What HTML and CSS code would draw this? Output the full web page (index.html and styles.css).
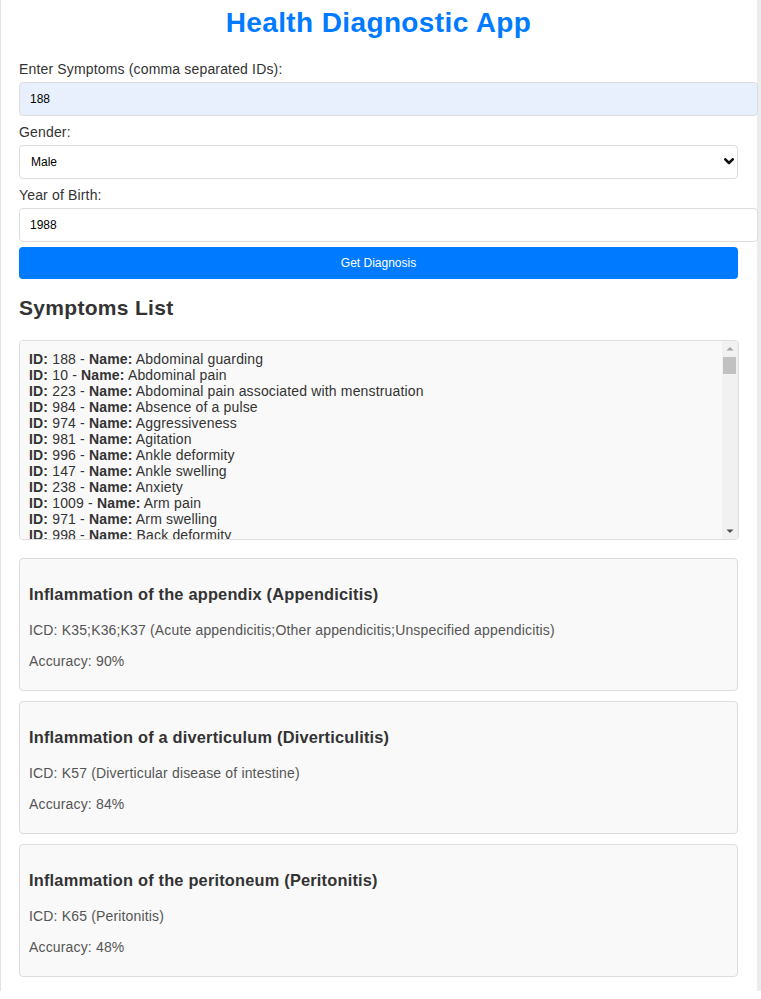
FILE: index.html
```html
<!DOCTYPE html>
<html lang="en">
<head>
<meta charset="utf-8">
<title>Health Diagnostic App</title>
<link rel="stylesheet" href="styles.css">
</head>
<body>
<div class="container">
  <h1 class="title">Health Diagnostic App</h1>
  <form class="form">
    <label class="label" for="symptoms">Enter Symptoms (comma separated IDs):</label>
    <input class="control control-text control-autofill" id="symptoms" type="text" value="188">
    <label class="label" for="gender">Gender:</label>
    <div class="select-wrap">
      <select class="control control-select" id="gender">
        <option selected>Male</option>
        <option>Female</option>
      </select>
      <svg class="select-arrow" width="10" height="7" viewBox="0 0 10 7" aria-hidden="true">
        <path d="M1.3 1.3 L5 5 L8.7 1.3" fill="none" stroke="#111" stroke-width="2.6" stroke-linecap="round" stroke-linejoin="round"/>
      </svg>
    </div>
    <label class="label" for="yob">Year of Birth:</label>
    <input class="control control-text" id="yob" type="text" value="1988">
    <button class="btn" type="button">Get Diagnosis</button>
  </form>

  <h2 class="section-title">Symptoms List</h2>
  <div class="list-wrap">
  <div class="symptoms-list">
    <div class="item"><strong>ID:</strong> 188 - <strong>Name:</strong> Abdominal guarding</div>
    <div class="item"><strong>ID:</strong> 10 - <strong>Name:</strong> Abdominal pain</div>
    <div class="item"><strong>ID:</strong> 223 - <strong>Name:</strong> Abdominal pain associated with menstruation</div>
    <div class="item"><strong>ID:</strong> 984 - <strong>Name:</strong> Absence of a pulse</div>
    <div class="item"><strong>ID:</strong> 974 - <strong>Name:</strong> Aggressiveness</div>
    <div class="item"><strong>ID:</strong> 981 - <strong>Name:</strong> Agitation</div>
    <div class="item"><strong>ID:</strong> 996 - <strong>Name:</strong> Ankle deformity</div>
    <div class="item"><strong>ID:</strong> 147 - <strong>Name:</strong> Ankle swelling</div>
    <div class="item"><strong>ID:</strong> 238 - <strong>Name:</strong> Anxiety</div>
    <div class="item"><strong>ID:</strong> 1009 - <strong>Name:</strong> Arm pain</div>
    <div class="item"><strong>ID:</strong> 971 - <strong>Name:</strong> Arm swelling</div>
    <div class="item"><strong>ID:</strong> 998 - <strong>Name:</strong> Back deformity</div>
    <div class="item"><strong>ID:</strong> 104 - <strong>Name:</strong> Back pain</div>
    <div class="item"><strong>ID:</strong> 180 - <strong>Name:</strong> Black stools</div>
    <div class="item"><strong>ID:</strong> 57 - <strong>Name:</strong> Blackening of vision</div>
    <div class="item"><strong>ID:</strong> 24 - <strong>Name:</strong> Blackhead</div>
    <div class="item"><strong>ID:</strong> 284 - <strong>Name:</strong> Bleeding from vagina</div>
    <div class="item"><strong>ID:</strong> 176 - <strong>Name:</strong> Bleeding in the conjunctiva of the eye</div>
    <div class="item"><strong>ID:</strong> 48 - <strong>Name:</strong> Bloated feeling in the stomach</div>
    <div class="item"><strong>ID:</strong> 190 - <strong>Name:</strong> Blood in stool</div>
    <div class="item"><strong>ID:</strong> 233 - <strong>Name:</strong> Bloody cough</div>
    <div class="item"><strong>ID:</strong> 991 - <strong>Name:</strong> Blue colored skin</div>
    <div class="item"><strong>ID:</strong> 240 - <strong>Name:</strong> Blue spot on skin</div>
    <div class="item"><strong>ID:</strong> 77 - <strong>Name:</strong> Blurred vision</div>
    <div class="item"><strong>ID:</strong> 239 - <strong>Name:</strong> Bold area among hair on the head</div>
    <div class="item"><strong>ID:</strong> 156 - <strong>Name:</strong> Bone fracture</div>
    <div class="item"><strong>ID:</strong> 250 - <strong>Name:</strong> Breathing-related pains</div>
    <div class="item"><strong>ID:</strong> 979 - <strong>Name:</strong> Brittle nails</div>
    <div class="item"><strong>ID:</strong> 192 - <strong>Name:</strong> Bulging abdominal wall</div>
    <div class="item"><strong>ID:</strong> 75 - <strong>Name:</strong> Burning eyes</div>
    <div class="item"><strong>ID:</strong> 46 - <strong>Name:</strong> Burning in the throat</div>
    <div class="item"><strong>ID:</strong> 288 - <strong>Name:</strong> Burning nose</div>
    <div class="item"><strong>ID:</strong> 107 - <strong>Name:</strong> Burning sensation when urinating</div>
    <div class="item"><strong>ID:</strong> 91 - <strong>Name:</strong> Changes in the nails</div>
    <div class="item"><strong>ID:</strong> 170 - <strong>Name:</strong> Cheek swelling</div>
    <div class="item"><strong>ID:</strong> 17 - <strong>Name:</strong> Chest pain</div>
    <div class="item"><strong>ID:</strong> 31 - <strong>Name:</strong> Chest tightness</div>
    <div class="item"><strong>ID:</strong> 175 - <strong>Name:</strong> Chills</div>
    <div class="item"><strong>ID:</strong> 218 - <strong>Name:</strong> Coarsening of the skin structure</div>
    <div class="item"><strong>ID:</strong> 89 - <strong>Name:</strong> Cold feet</div>
    <div class="item"><strong>ID:</strong> 978 - <strong>Name:</strong> Cold hands</div>
    <div class="item"><strong>ID:</strong> 139 - <strong>Name:</strong> Cold sweats</div>
    <div class="item"><strong>ID:</strong> 15 - <strong>Name:</strong> Cough</div>
    <div class="item"><strong>ID:</strong> 228 - <strong>Name:</strong> Cough with sputum</div>
    <div class="item"><strong>ID:</strong> 94 - <strong>Name:</strong> Cramps</div>
    <div class="item"><strong>ID:</strong> 49 - <strong>Name:</strong> Cravings</div>
    <div class="item"><strong>ID:</strong> 134 - <strong>Name:</strong> Crusting</div>
    <div class="item"><strong>ID:</strong> 260 - <strong>Name:</strong> Curvature of the spine</div>
    <div class="item"><strong>ID:</strong> 108 - <strong>Name:</strong> Dark urine</div>
    <div class="item"><strong>ID:</strong> 163 - <strong>Name:</strong> Decreased urine stream</div>
    <div class="item"><strong>ID:</strong> 165 - <strong>Name:</strong> Delayed start to urination</div>
    <div class="item"><strong>ID:</strong> 50 - <strong>Name:</strong> Diarrhea</div>
    <div class="item"><strong>ID:</strong> 79 - <strong>Name:</strong> Difficult defecation</div>
    <div class="item"><strong>ID:</strong> 126 - <strong>Name:</strong> Difficulty in finding words</div>
    <div class="item"><strong>ID:</strong> 98 - <strong>Name:</strong> Difficulty in speaking</div>
    <div class="item"><strong>ID:</strong> 93 - <strong>Name:</strong> Difficulty in swallowing</div>
    <div class="item"><strong>ID:</strong> 53 - <strong>Name:</strong> Difficulty to concentrate</div>
    <div class="item"><strong>ID:</strong> 1007 - <strong>Name:</strong> Difficulty to learn</div>
    <div class="item"><strong>ID:</strong> 1005 - <strong>Name:</strong> Difficulty with movement</div>
    <div class="item"><strong>ID:</strong> 216 - <strong>Name:</strong> Dilated veins</div>
    <div class="item"><strong>ID:</strong> 207 - <strong>Name:</strong> Dizziness</div>
    <div class="item"><strong>ID:</strong> 244 - <strong>Name:</strong> Double vision</div>
    <div class="item"><strong>ID:</strong> 43 - <strong>Name:</strong> Drowsiness</div>
    <div class="item"><strong>ID:</strong> 273 - <strong>Name:</strong> Dry eyes</div>
    <div class="item"><strong>ID:</strong> 272 - <strong>Name:</strong> Dry mouth</div>
    <div class="item"><strong>ID:</strong> 151 - <strong>Name:</strong> Dry skin</div>
    <div class="item"><strong>ID:</strong> 87 - <strong>Name:</strong> Earache</div>
    <div class="item"><strong>ID:</strong> 92 - <strong>Name:</strong> Early satiety</div>
    <div class="item"><strong>ID:</strong> 1011 - <strong>Name:</strong> Elbow pain</div>
    <div class="item"><strong>ID:</strong> 1006 - <strong>Name:</strong> Enlarged calf</div>
    <div class="item"><strong>ID:</strong> 81 - <strong>Name:</strong> Eruption of skin</div>
    <div class="item"><strong>ID:</strong> 40 - <strong>Name:</strong> Excessive appetite</div>
    <div class="item"><strong>ID:</strong> 224 - <strong>Name:</strong> Excessive urination at night</div>
    <div class="item"><strong>ID:</strong> 257 - <strong>Name:</strong> Eye pain</div>
    <div class="item"><strong>ID:</strong> 259 - <strong>Name:</strong> Eye redness</div>
    <div class="item"><strong>ID:</strong> 2 - <strong>Name:</strong> Fast, deepened breathing</div>
    <div class="item"><strong>ID:</strong> 16 - <strong>Name:</strong> Fatigue</div>
    <div class="item"><strong>ID:</strong> 36 - <strong>Name:</strong> Feeling of tension in the legs</div>
    <div class="item"><strong>ID:</strong> 11 - <strong>Name:</strong> Fever</div>
    <div class="item"><strong>ID:</strong> 196 - <strong>Name:</strong> Flatulence</div>
    <div class="item"><strong>ID:</strong> 65 - <strong>Name:</strong> Flu-like symptoms</div>
    <div class="item"><strong>ID:</strong> 232 - <strong>Name:</strong> Foot pain</div>
    <div class="item"><strong>ID:</strong> 1010 - <strong>Name:</strong> Foot swelling</div>
    <div class="item"><strong>ID:</strong> 9 - <strong>Name:</strong> Headache</div>
    <div class="item"><strong>ID:</strong> 45 - <strong>Name:</strong> Heartburn</div>
    <div class="item"><strong>ID:</strong> 122 - <strong>Name:</strong> Hiccups</div>
    <div class="item"><strong>ID:</strong> 149 - <strong>Name:</strong> Hip deformity</div>
    <div class="item"><strong>ID:</strong> 148 - <strong>Name:</strong> Hip pain</div>
    <div class="item"><strong>ID:</strong> 37 - <strong>Name:</strong> Hoarseness</div>
    <div class="item"><strong>ID:</strong> 23 - <strong>Name:</strong> Hot flushes</div>
    <div class="item"><strong>ID:</strong> 124 - <strong>Name:</strong> Immobilization</div>
    <div class="item"><strong>ID:</strong> 123 - <strong>Name:</strong> Impaired balance</div>
    <div class="item"><strong>ID:</strong> 33 - <strong>Name:</strong> Increased appetite</div>
    <div class="item"><strong>ID:</strong> 38 - <strong>Name:</strong> Increased drive</div>
    <div class="item"><strong>ID:</strong> 142 - <strong>Name:</strong> Increased salivation</div>
    <div class="item"><strong>ID:</strong> 52 - <strong>Name:</strong> Insomnia</div>
    <div class="item"><strong>ID:</strong> 13 - <strong>Name:</strong> Itching eyes</div>
    <div class="item"><strong>ID:</strong> 96 - <strong>Name:</strong> Itching of skin</div>
    <div class="item"><strong>ID:</strong> 25 - <strong>Name:</strong> Joint pain</div>
    <div class="item"><strong>ID:</strong> 256 - <strong>Name:</strong> Knee pain</div>
    <div class="item"><strong>ID:</strong> 56 - <strong>Name:</strong> Lack of appetite</div>
    <div class="item"><strong>ID:</strong> 146 - <strong>Name:</strong> Leg pain</div>
    <div class="item"><strong>ID:</strong> 42 - <strong>Name:</strong> Lip swelling</div>
    <div class="item"><strong>ID:</strong> 144 - <strong>Name:</strong> Memory gap</div>
    <div class="item"><strong>ID:</strong> 6 - <strong>Name:</strong> Morning stiffness</div>
    <div class="item"><strong>ID:</strong> 105 - <strong>Name:</strong> Mouth ulcers</div>
    <div class="item"><strong>ID:</strong> 20 - <strong>Name:</strong> Muscle pain</div>
    <div class="item"><strong>ID:</strong> 44 - <strong>Name:</strong> Nausea</div>
    <div class="item"><strong>ID:</strong> 136 - <strong>Name:</strong> Neck pain</div>
    <div class="item"><strong>ID:</strong> 114 - <strong>Name:</strong> Nervousness</div>
    <div class="item"><strong>ID:</strong> 133 - <strong>Name:</strong> Night cough</div>
    <div class="item"><strong>ID:</strong> 35 - <strong>Name:</strong> Pain in the limbs</div>
    <div class="item"><strong>ID:</strong> 29 - <strong>Name:</strong> Shortness of breath</div>
    <div class="item"><strong>ID:</strong> 14 - <strong>Name:</strong> Sore throat</div>
    <div class="item"><strong>ID:</strong> 138 - <strong>Name:</strong> Sweating</div>
    <div class="item"><strong>ID:</strong> 101 - <strong>Name:</strong> Vomiting</div>
    <div class="item"><strong>ID:</strong> 54 - <strong>Name:</strong> Weight loss</div>
  </div>
  <div class="scrollbar" aria-hidden="true">
    <svg class="scroll-arrow" width="16" height="15" viewBox="0 0 16 15"><path d="M4.5 9.5 L8 6 L11.5 9.5 Z" fill="#a3a3a3"/></svg>
    <div class="scroll-track"><div class="scroll-thumb"></div></div>
    <svg class="scroll-arrow" width="16" height="15" viewBox="0 0 16 15"><path d="M4.5 5.5 L8 9 L11.5 5.5 Z" fill="#505050"/></svg>
  </div>
  </div>

  <div class="results">
    <div class="card">
      <h3 class="card-title">Inflammation of the appendix (Appendicitis)</h3>
      <p class="card-text">ICD: K35;K36;K37 (Acute appendicitis;Other appendicitis;Unspecified appendicitis)</p>
      <p class="card-text">Accuracy: 90%</p>
    </div>
    <div class="card">
      <h3 class="card-title">Inflammation of a diverticulum (Diverticulitis)</h3>
      <p class="card-text">ICD: K57 (Diverticular disease of intestine)</p>
      <p class="card-text">Accuracy: 84%</p>
    </div>
    <div class="card">
      <h3 class="card-title">Inflammation of the peritoneum (Peritonitis)</h3>
      <p class="card-text">ICD: K65 (Peritonitis)</p>
      <p class="card-text">Accuracy: 48%</p>
    </div>
  </div>
</div>
</body>
</html>
```

FILE: styles.css
```css
html, body {
  margin: 0;
  padding: 0;
  background: #ffffff;
}

body {
  font-family: "Liberation Sans", Arial, sans-serif;
  font-size: 14px;
  letter-spacing: 0.16px;
  color: #333333;
}

.container {
  width: 761px;
  box-sizing: border-box;
  border-left: 1px solid #e3e3e3;
  border-right: 4px solid #ececec;
  padding: 7px 19px 4px 18px;
}

.title {
  margin: 0 0 19px;
  font-size: 28px;
  font-weight: bold;
  letter-spacing: 0.38px;
  color: #007bff;
  text-align: center;
}

.form {
  display: flex;
  flex-direction: column;
  align-items: flex-start;
}

.label {
  display: block;
  margin: 3px 0 5px;
  line-height: 16px;
  color: #333333;
}

.control {
  box-sizing: border-box;
  height: 34px;
  margin: 0 0 5px;
  padding: 9px 10px;
  font-family: "Liberation Sans", Arial, sans-serif;
  font-size: 12px;
  line-height: 14px;
  letter-spacing: 0;
  color: #000000;
  background: #ffffff;
  border: 1px solid #dddddd;
  border-radius: 4px;
}

.control-text {
  width: 739px;
}

.control-autofill {
  background: #e8f0fe;
}

.select-wrap {
  position: relative;
  align-self: stretch;
}

.control-select {
  display: block;
  width: 100%;
  padding: 0 30px 0 11px;
  -webkit-appearance: none;
  appearance: none;
}

.select-arrow {
  position: absolute;
  right: 4px;
  top: 13px;
  pointer-events: none;
}

.btn {
  width: 100%;
  height: 32px;
  padding: 0;
  border: none;
  border-radius: 4px;
  background: #007bff;
  color: #ffffff;
  font-family: "Liberation Sans", Arial, sans-serif;
  font-size: 12px;
  letter-spacing: 0;
}

.section-title {
  margin: 17px 0 20px;
  font-size: 21px;
  font-weight: bold;
  letter-spacing: 0.3px;
  color: #333333;
}

.list-wrap {
  position: relative;
  margin-right: -1px;
}

.symptoms-list {
  box-sizing: border-box;
  height: 200px;
  overflow-y: auto;
  padding: 10px 26px 10px 9px;
  background: #f9f9f9;
  border: 1px solid #dddddd;
  border-radius: 4px;
  color: #333333;
}

.scrollbar {
  position: absolute;
  top: 1px;
  right: 1px;
  bottom: 1px;
  width: 16px;
  display: flex;
  flex-direction: column;
  background: #f1f1f1;
  border-radius: 0 3px 3px 0;
}

.scroll-arrow {
  display: block;
  flex: none;
}

.scroll-track {
  flex: 1;
  padding: 1px 2px 0 1px;
}

.scroll-thumb {
  height: 17px;
  background: #c1c1c1;
}

.item {
  line-height: 16px;
}

.results {
  margin-top: 18px;
}

.card {
  margin-bottom: 10px;
  padding: 10px 10px 10px 9px;
  background: #f9f9f9;
  border: 1px solid #dddddd;
  border-radius: 4px;
}

.card-title {
  margin: 16px 0 18px;
  font-size: 16.38px;
  font-weight: bold;
  letter-spacing: 0.2px;
  color: #333333;
}

.card-text {
  margin: 15px 0;
  color: #555555;
}

.card-text:last-child {
  margin-bottom: 11px;
}
```
